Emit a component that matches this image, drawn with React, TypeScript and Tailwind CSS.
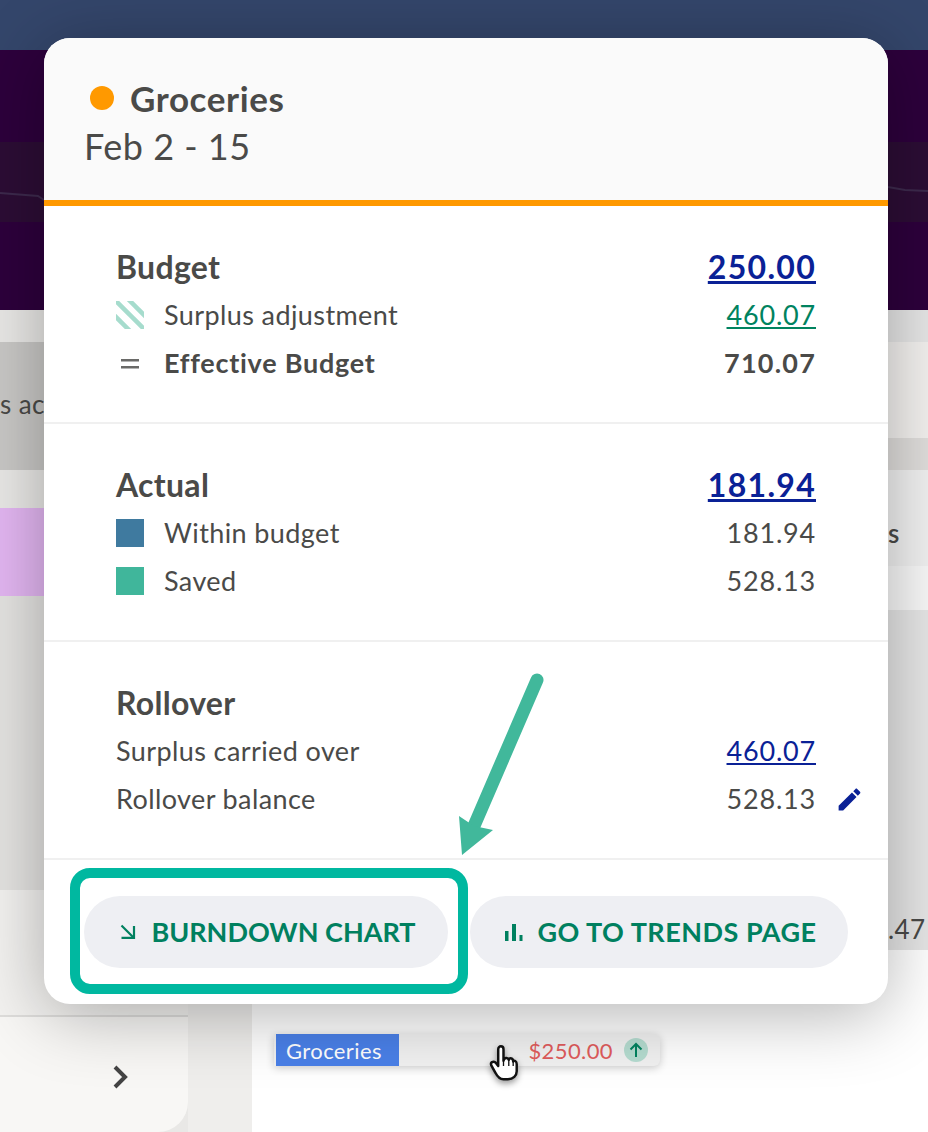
import React from 'react';

const Row: React.FC<{ icon?: React.ReactNode; label: string; bold?: boolean; children: React.ReactNode }> = ({
  icon,
  label,
  bold,
  children,
}) => (
  <div className="relative flex h-12 items-center justify-between">
    <div className="flex items-center">
      {icon && <div className="flex w-12 items-center">{icon}</div>}
      <span className={bold ? 'font-bold tracking-[0.75px]' : ''}>{label}</span>
    </div>
    {children}
  </div>
);

const Stripes = () => (
  <svg width="28" height="28" viewBox="0 0 28 28">
    <defs>
      <clipPath id="sq">
        <rect width="28" height="28" />
      </clipPath>
    </defs>
    <g clipPath="url(#sq)" stroke="#a6dccd" strokeWidth="4.5">
      <path d="M-4 12 L20 36" />
      <path d="M-2 -2 L30 30" />
      <path d="M12 -2 L36 22" />
    </g>
  </svg>
);

const Equals = () => (
  <svg width="28" height="28" viewBox="0 0 28 28">
    <rect x="5" y="10" width="18" height="2.5" fill="#6a6a68" />
    <rect x="5" y="17" width="18" height="2.5" fill="#6a6a68" />
  </svg>
);

const BurndownIcon = () => (
  <svg width="16" height="16" viewBox="0 0 16 16" fill="none" stroke="#00805f" strokeWidth="2.2">
    <path d="M1.5 1.5 L13.5 13.5" />
    <path d="M14 2 V13.9 H1.5" />
  </svg>
);

const BarsIcon = () => (
  <svg width="18" height="17" viewBox="0 0 18 17" fill="#00805f">
    <rect x="0" y="7" width="3.5" height="10" />
    <rect x="7" y="0" width="4" height="17" />
    <rect x="14.5" y="11" width="3" height="6" />
  </svg>
);

export default function App() {
  return (
    <div className="relative h-[1132px] w-[928px] overflow-hidden bg-white font-[Lato,sans-serif] text-[27px] tracking-[0.4px] text-[#4a4a48]">
      {/* page behind the popover */}
      <div className="h-[50px] bg-[#34466b]" />
      <div className="relative h-[260px] bg-[#2d003c] pt-[92px]">
        <div className="h-20 bg-[#2c0d35]" />
        <svg className="absolute left-0 top-[130px]" width="928" height="30" viewBox="0 0 928 30" fill="none" stroke="#3d2a4d" strokeWidth="2">
          <path d="M0 13 L38 16 L44 20" />
          <path d="M888 7 L905 10 L928 11" />
        </svg>
      </div>
      <div className="flex h-[822px]">
        <div className="flex w-[188px] flex-col bg-[#e9e8e6]">
          <div className="mt-8 flex h-32 items-center bg-[#c9c8c6] pb-1 text-[26px]">s ac</div>
          <div className="mt-[38px] h-[88px] bg-[#e3b6f2]" />
          <div className="h-[294px] bg-[#e4e3e1]" />
          <div className="h-[127px] border-b-2 border-[#dedddb] bg-[#f3f2f0]" />
          <div className="flex flex-1 items-center justify-end rounded-br-[30px] bg-[#f8f7f5] pr-[60px] pt-1">
            <svg width="16" height="24" viewBox="0 0 16 24" fill="none" stroke="#444" strokeWidth="4">
              <path d="M3 2 L13 12 L3 22" />
            </svg>
          </div>
        </div>
        <div className="w-16 bg-[#efeeec]" />
        <div className="flex-1 bg-white" />
      </div>
      <div className="absolute right-0 top-[310px] flex w-10 flex-col">
        <div className="h-8 bg-[#e6e6e6]" />
        <div className="h-24 bg-[#f3f1ef]" />
        <div className="h-8 bg-[#e0dedc]" />
        <div className="flex h-24 items-center bg-[#f1f1f1] pt-[30px] text-[26px] font-semibold leading-none">s</div>
        <div className="h-11 bg-[#f8f8f8]" />
        <div className="flex h-[340px] items-end bg-[#e6e6e6] pb-2 text-[26px] leading-none">.47</div>
      </div>

      {/* hovered row */}
      <div className="absolute left-[274px] top-[1034px] flex h-8 w-[386px] items-center rounded-r-md bg-[#f1f1f1] pl-0.5 text-[22px] shadow-[0_2px_8px_rgba(0,0,0,0.2)]">
        <div className="flex h-8 w-[123px] items-center bg-[#4a80e8] pl-2.5 text-white">Groceries</div>
        <div className="ml-auto mr-3 flex items-center gap-[11px] text-[#e05c5c]">
          <span>$250.00</span>
          <span className="flex h-6 w-6 items-center justify-center rounded-full bg-[#b5dcd0]">
            <svg width="16" height="16" viewBox="0 0 16 16" fill="none" stroke="#00835f" strokeWidth="2">
              <path d="M8 15 V2 M2.5 7.5 L8 2 L13.5 7.5" />
            </svg>
          </span>
        </div>
      </div>

      {/* popover */}
      <svg className="absolute left-[436px] top-[1003px]" width="60" height="21" viewBox="0 0 60 21" fill="#fff">
        <path d="M0 0 H60 L30 21 Z" />
      </svg>
      <div className="absolute left-11 top-[38px] h-[966px] w-[844px] rounded-[26px] bg-white shadow-[0_10px_70px_rgba(0,0,0,0.3)]">
        <div className="h-[168px] rounded-t-[26px] border-b-[6px] border-[#ff9900] bg-[#fafafa] pl-10 pt-9">
          <div className="flex h-12 items-center text-[35px] font-bold tracking-[0.6px]">
            <span className="ml-1.5 mr-4 h-6 w-6 rounded-full bg-[#ff9900]" />
            Groceries
          </div>
          <div className="h-12 text-[36px] leading-[48px] tracking-[0.5px]">Feb 2 - 15</div>
        </div>

        <div className="border-b-2 border-[#f0f0f0] px-[72px] pb-[35px] pt-[37px]">
          <div className="flex h-12 items-center justify-between text-[32px] font-bold tracking-[0.3px]">
            <span>Budget</span>
            <a className="tracking-[1.3px] text-[#0a2196] underline">250.00</a>
          </div>
          <Row icon={<Stripes />} label="Surplus adjustment">
            <a className="tracking-[0.8px] text-[#00835f] underline">460.07</a>
          </Row>
          <Row icon={<Equals />} label="Effective Budget" bold>
            <span className="font-bold tracking-[1.2px]">710.07</span>
          </Row>
        </div>

        <div className="border-b-2 border-[#f0f0f0] px-[72px] pb-[35px] pt-[37px]">
          <div className="flex h-12 items-center justify-between text-[32px] font-bold tracking-[0.3px]">
            <span>Actual</span>
            <a className="tracking-[1.3px] text-[#0a2196] underline">181.94</a>
          </div>
          <Row icon={<div className="h-7 w-7 bg-[#3f7a9f]" />} label="Within budget">
            <span className="tracking-[0.8px]">181.94</span>
          </Row>
          <Row icon={<div className="h-7 w-7 bg-[#40b69b]" />} label="Saved">
            <span className="tracking-[0.8px]">528.13</span>
          </Row>
        </div>

        <div className="border-b-2 border-[#f0f0f0] px-[72px] pb-[35px] pt-[37px]">
          <div className="flex h-12 items-center text-[32px] font-bold tracking-[0.3px]">Rollover</div>
          <Row label="Surplus carried over">
            <a className="tracking-[0.8px] text-[#0a2196] underline">460.07</a>
          </Row>
          <Row label="Rollover balance">
            <span className="tracking-[0.8px]">528.13</span>
            <svg className="absolute -right-[48px] top-2.5" width="29" height="29" viewBox="0 0 24 24" fill="#0a2196">
              <path d="M3 17.25V21h3.75L17.81 9.94l-3.75-3.75L3 17.25zM20.71 7.04c.39-.39.39-1.02 0-1.41l-2.34-2.34c-.39-.39-1.02-.39-1.41 0l-1.83 1.83 3.75 3.75 1.83-1.83z" />
            </svg>
          </Row>
        </div>

        <div className="flex gap-[22px] pl-10 pt-9 text-[27px] font-bold tracking-normal text-[#00805f]">
          <button className="flex h-[72px] w-[364px] items-center justify-center gap-[15px] rounded-full bg-[#eeeff3] pl-1">
            <BurndownIcon />
            BURNDOWN CHART
          </button>
          <button className="flex h-[72px] w-[378px] items-center justify-center gap-[14px] rounded-full bg-[#eeeff3] pl-1 tracking-[0.5px]">
            <BarsIcon />
            GO TO TRENDS PAGE
          </button>
        </div>
      </div>

      {/* annotation */}
      <div className="absolute left-[70px] top-[868px] h-[126px] w-[398px] rounded-[20px] border-[10px] border-[#00b8a0]" />
      <svg className="absolute left-[450px] top-[670px]" width="100" height="195" viewBox="0 0 100 195" fill="none">
        <path d="M87 10 L24 156" stroke="#41b89b" strokeWidth="13" strokeLinecap="round" />
        <path d="M12 185 L9 146 L24 156 L43 160 Z" fill="#41b89b" />
      </svg>

      {/* hand cursor */}
      <svg className="absolute left-[488px] top-[1044px] drop-shadow-[0_3px_3px_rgba(0,0,0,0.4)]" width="31" height="37" viewBox="0 0 34 42" fill="#fff" stroke="#111" strokeWidth="2.8" strokeLinejoin="round">
        <path d="M11 6 C11 1.5 17 1.5 17 6 V19 C18 15 22 15 23 18 C24 15 28 16 28 20 C29 18 32 19 32 23 V31 C32 36 28 40 22 40 H17 C12 40 10 37 8 33 L3 24 C2 21 5 19 8 21 L11 25 Z" />
        <path d="M17 19 V25 M23 18 V25 M28 20 V25" fill="none" strokeWidth="1.5" />
      </svg>
    </div>
  );
}
